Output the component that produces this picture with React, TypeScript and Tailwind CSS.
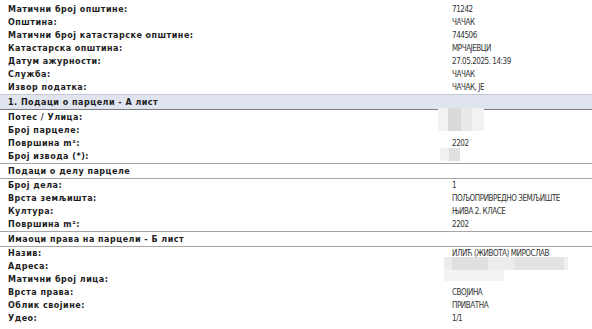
import React from "react";

type Row = { label: string; value?: string; blur?: "a" | "b" | "c" };

const top: Row[] = [
  { label: "Матични број општине:", value: "71242" },
  { label: "Општина:", value: "ЧАЧАК" },
  { label: "Матични број катастарске општине:", value: "744506" },
  { label: "Катастарска општина:", value: "МРЧАЈЕВЦИ" },
  { label: "Датум ажурности:", value: "27.05.2025. 14:39" },
  { label: "Служба:", value: "ЧАЧАК" },
  { label: "Извор податка:", value: "ЧАЧАК, ЈЕ" },
];

const parcel: Row[] = [
  { label: "Потес / Улица:", blur: "a" },
  { label: "Број парцеле:" },
  { label: "Површина m²:", value: "2202" },
  { label: "Број извода (*):", blur: "b" },
];

const part: Row[] = [
  { label: "Број дела:", value: "1" },
  { label: "Врста земљишта:", value: "ПОЉОПРИВРЕДНО ЗЕМЉИШТЕ" },
  { label: "Култура:", value: "ЊИВА 2. КЛАСЕ" },
  { label: "Површина m²:", value: "2202" },
];

const owners: Row[] = [
  { label: "Назив:", value: "ИЛИЋ (ЖИВОТА) МИРОСЛАВ" },
  { label: "Адреса:", blur: "c" },
  { label: "Матични број лица:" },
  { label: "Врста права:", value: "СВОЈИНА" },
  { label: "Облик својине:", value: "ПРИВАТНА" },
  { label: "Удео:", value: "1/1" },
];

function Blur({ kind }: { kind: string }) {
  if (kind === "a")
    return (
      <div className="absolute left-[-6px] top-[-3px] w-[46px] h-[23px] bg-[linear-gradient(to_right,#f2f2f2_0_10px,#dadada_10px_23px,#e8e8e8_23px_34px,#f2f2f2_34px)]" />
    );
  if (kind === "b")
    return (
      <div className="absolute left-[-4px] top-[-2px] w-[20px] h-[13px] bg-[linear-gradient(to_right,#f1f1f1_0_9px,#e0e0e0_9px)]" />
    );
  return (
    <div className="absolute left-0 top-[-3px] w-[124px] h-[24px] bg-[linear-gradient(to_bottom,transparent_0_13px,#f3f3f3_13px),linear-gradient(to_right,#ececec_0_8px,#e0e0e0_8px_44px,#ededed_44px_70px,#e3e3e3_70px_120px,#f0f0f0_120px)] bg-no-repeat bg-[length:60px_24px,124px_13px]" />
  );
}

function Rows({ rows }: { rows: Row[] }) {
  return (
    <div className="flex flex-col">
      {rows.map((r, i) => (
        <div key={i} className="flex h-[13px] items-center">
          <div className="w-[444px] pl-[8px] font-bold text-[8px] tracking-[0.5px] text-[#1c1c1c]">{r.label}</div>
          <div className="relative flex-1 h-[13px] pl-[8px] text-[8px] tracking-[-0.45px] font-stretch-semi-condensed text-[#333]">
            {r.blur ? <Blur kind={r.blur} /> : r.value}
          </div>
        </div>
      ))}
    </div>
  );
}

function Section({ title, tone }: { title: string; tone: "blue" | "plain" }) {
  return tone === "blue" ? (
    <div className="flex h-[16px] items-center bg-[#dfe4ef] border-t border-t-[#c3c8d2] border-b border-b-[#7d7d7d] pl-[8px] font-bold text-[8px] tracking-[0.5px] text-[#1c1c1c]">
      {title}
    </div>
  ) : (
    <div className="flex h-[16px] items-center border-t border-b border-[#a5a5a5] pl-[8px] font-bold text-[8px] tracking-[0.5px] text-[#1c1c1c]">
      {title}
    </div>
  );
}

export default function App() {
  return (
    <div
      className="flex flex-col w-[592px] h-[329px] overflow-hidden bg-white pt-[3px] leading-[13px]"
      style={{ fontFamily: '"DejaVu Sans", Verdana, sans-serif' }}
    >
      <Rows rows={top} />
      <Section title="1. Подаци о парцели - А лист" tone="blue" />
      <div className="pt-[1px]">
        <Rows rows={parcel} />
      </div>
      <Section title="Подаци о делу парцеле" tone="plain" />
      <Rows rows={part} />
      <Section title="Имаоци права на парцели - Б лист" tone="plain" />
      <Rows rows={owners} />
    </div>
  );
}
